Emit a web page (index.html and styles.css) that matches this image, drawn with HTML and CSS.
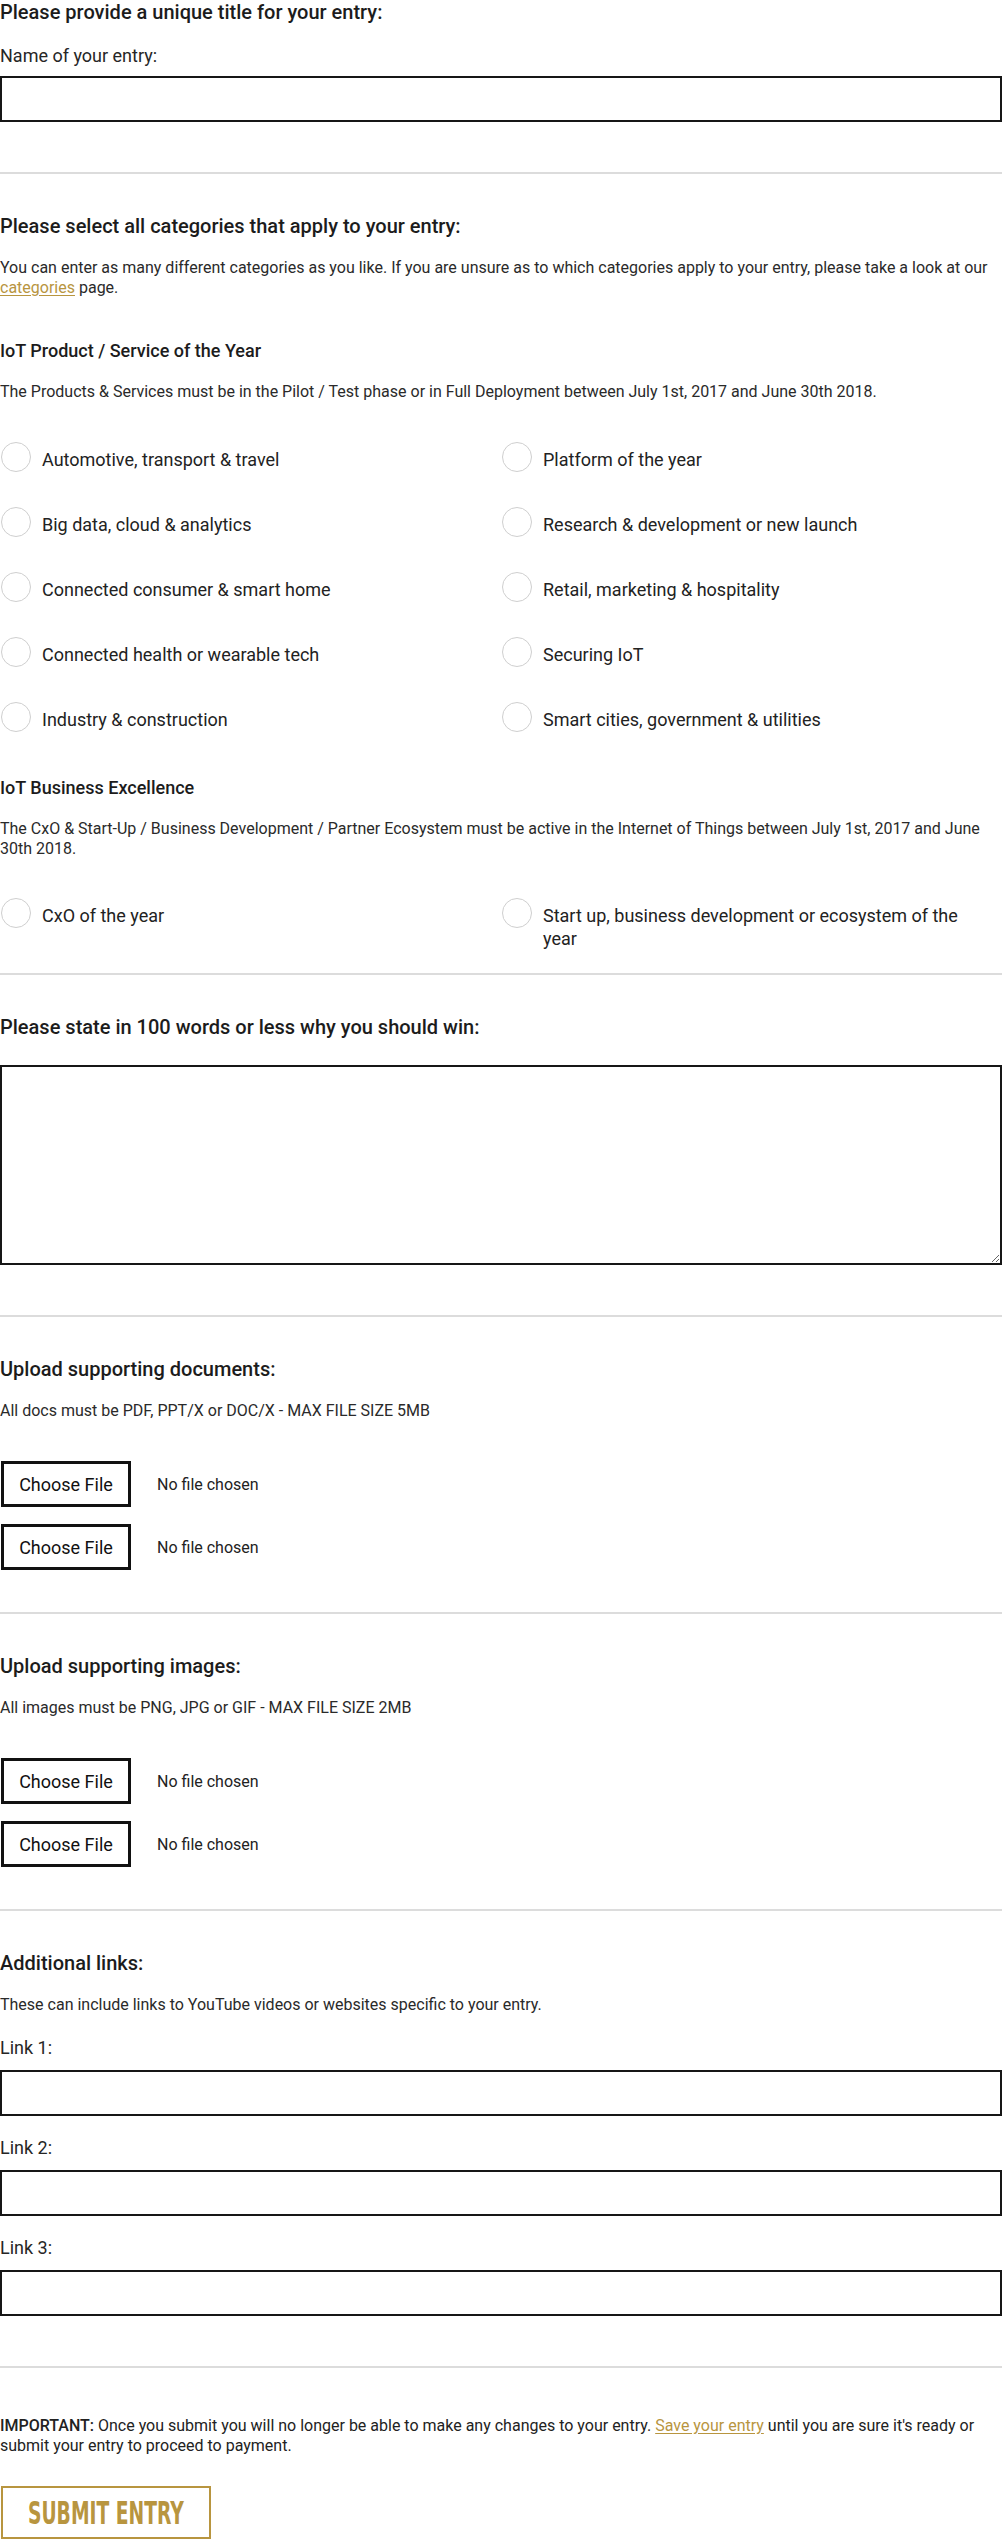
FILE: index.html
```html
<!DOCTYPE html>
<html lang="en">
<head>
<meta charset="utf-8">
<title>Entry form</title>
<link rel="stylesheet" href="styles.css">
</head>
<body>
<form class="entry-form">
  <section class="block block-first">
    <h2 class="block-title">Please provide a unique title for your entry:</h2>
    <label class="field-label" for="entry-name">Name of your entry:</label>
    <input class="text-input" id="entry-name" type="text">
  </section>
  <hr class="divider divider-after-input">

  <section class="block">
    <h2 class="block-title">Please select all categories that apply to your entry:</h2>
    <p class="note">You can enter as many different categories as you like. If you are unsure as to which categories apply to your entry, please take a look at our <a class="gold-link" href="#">categories</a> page.</p>

    <h3 class="group-title">IoT Product / Service of the Year</h3>
    <p class="note note-after-group">The Products &amp; Services must be in the Pilot / Test phase or in Full Deployment between July 1st, 2017 and June 30th 2018.</p>
    <div class="options options-first">
      <label class="option"><input type="checkbox" class="circle"><span class="option-text">Automotive, transport &amp; travel</span></label>
      <label class="option"><input type="checkbox" class="circle"><span class="option-text">Platform of the year</span></label>
      <label class="option"><input type="checkbox" class="circle"><span class="option-text">Big data, cloud &amp; analytics</span></label>
      <label class="option"><input type="checkbox" class="circle"><span class="option-text">Research &amp; development or new launch</span></label>
      <label class="option"><input type="checkbox" class="circle"><span class="option-text">Connected consumer &amp; smart home</span></label>
      <label class="option"><input type="checkbox" class="circle"><span class="option-text">Retail, marketing &amp; hospitality</span></label>
      <label class="option"><input type="checkbox" class="circle"><span class="option-text">Connected health or wearable tech</span></label>
      <label class="option"><input type="checkbox" class="circle"><span class="option-text">Securing IoT</span></label>
      <label class="option"><input type="checkbox" class="circle"><span class="option-text">Industry &amp; construction</span></label>
      <label class="option"><input type="checkbox" class="circle"><span class="option-text">Smart cities, government &amp; utilities</span></label>
    </div>

    <h3 class="group-title group-title-second">IoT Business Excellence</h3>
    <p class="note note-after-group">The CxO &amp; Start-Up / Business Development / Partner Ecosystem must be active in the Internet of Things between July 1st, 2017 and June 30th 2018.</p>
    <div class="options options-second">
      <label class="option"><input type="checkbox" class="circle"><span class="option-text">CxO of the year</span></label>
      <label class="option"><input type="checkbox" class="circle"><span class="option-text">Start up, business development or ecosystem of the year</span></label>
    </div>
  </section>
  <hr class="divider divider-after-options">

  <section class="block">
    <h2 class="block-title">Please state in 100 words or less why you should win:</h2>
    <textarea class="text-area"></textarea>
  </section>
  <hr class="divider divider-after-input">

  <section class="block">
    <h2 class="block-title">Upload supporting documents:</h2>
    <p class="note">All docs must be PDF, PPT/X or DOC/X - MAX FILE SIZE 5MB</p>
    <div class="files">
      <div class="file-row"><button type="button" class="file-button">Choose File</button><span class="file-status">No file chosen</span></div>
      <div class="file-row"><button type="button" class="file-button">Choose File</button><span class="file-status">No file chosen</span></div>
    </div>
  </section>
  <hr class="divider divider-after-files">

  <section class="block">
    <h2 class="block-title">Upload supporting images:</h2>
    <p class="note">All images must be PNG, JPG or GIF - MAX FILE SIZE 2MB</p>
    <div class="files">
      <div class="file-row"><button type="button" class="file-button">Choose File</button><span class="file-status">No file chosen</span></div>
      <div class="file-row"><button type="button" class="file-button">Choose File</button><span class="file-status">No file chosen</span></div>
    </div>
  </section>
  <hr class="divider divider-after-files">

  <section class="block">
    <h2 class="block-title">Additional links:</h2>
    <p class="note">These can include links to YouTube videos or websites specific to your entry.</p>
    <label class="field-label link-label" for="link-1">Link 1:</label>
    <input class="text-input" id="link-1" type="text">
    <label class="field-label link-label" for="link-2">Link 2:</label>
    <input class="text-input" id="link-2" type="text">
    <label class="field-label link-label" for="link-3">Link 3:</label>
    <input class="text-input" id="link-3" type="text">
  </section>
  <hr class="divider divider-after-input">

  <section class="block block-last">
    <p class="notice"><span class="notice-strong">IMPORTANT:</span> Once you submit you will no longer be able to make any changes to your entry. <a class="gold-link" href="#">Save your entry</a> until you are sure it's ready or submit your entry to proceed to payment.</p>
    <button type="submit" class="submit-button"><span class="submit-text">SUBMIT ENTRY</span></button>
  </section>
</form>
</body>
</html>
```
FILE: styles.css
```css
* {
  box-sizing: border-box;
}

html, body {
  margin: 0;
  padding: 0;
  background: #ffffff;
}

body {
  font-family: Roboto, "Liberation Sans", Arial, sans-serif;
  color: #222222;
  width: 1002px;
}

.entry-form {
  display: flex;
  flex-direction: column;
}

.block {
  display: flex;
  flex-direction: column;
  align-items: stretch;
  padding-top: 40px;
}

.block-first {
  padding-top: 0;
}

.block-title {
  font-size: 20px;
  line-height: 24px;
  font-weight: 500;
  margin: 0;
  color: #1c1c1c;
}

.field-label {
  font-size: 18px;
  line-height: 24px;
  font-weight: 400;
  color: #262626;
  margin-top: 20px;
  margin-bottom: 8px;
}

.link-label {
  margin-bottom: 10px;
}

.note + .link-label {
  margin-top: 21px;
}

.text-input {
  display: block;
  width: 100%;
  height: 46px;
  border: 2px solid #161616;
  border-radius: 0;
  background: #fff;
  padding: 0 10px;
  font: inherit;
  font-size: 18px;
  margin: 0;
  outline: none;
}

.text-area {
  display: block;
  width: 100%;
  height: 200px;
  border: 2px solid #161616;
  border-radius: 0;
  background: #fff;
  padding: 8px 10px;
  font: inherit;
  font-size: 18px;
  margin: 26px 0 0;
  resize: vertical;
}

.divider {
  border: 0;
  border-top: 2px solid #dcdcdc;
  margin: 0;
  height: 0;
  width: 100%;
}

.divider-after-input {
  margin-top: 50px;
}

.divider-after-options {
  margin-top: 23px;
}

.divider-after-files {
  margin-top: 42px;
}

.note {
  font-size: 16px;
  line-height: 20px;
  margin: 20px 0 0;
  color: #2a2a2a;
}

.note-after-group {
  margin-top: 19px;
}

.gold-link {
  color: #b8953f;
  text-decoration: underline;
  text-underline-offset: 2px;
}

.group-title {
  font-size: 18px;
  line-height: 24px;
  font-weight: 500;
  margin: 41px 0 0;
  color: #1c1c1c;
}

.group-title-second {
  margin-top: 44px;
}

.options {
  display: grid;
  grid-template-columns: 501px 1fr;
  row-gap: 35px;
  column-gap: 0;
}

.options-first {
  margin-top: 40px;
}

.options-second {
  margin-top: 39px;
}

.option {
  display: flex;
  align-items: flex-start;
  gap: 11px;
  cursor: pointer;
}

.circle {
  appearance: none;
  -webkit-appearance: none;
  flex: 0 0 30px;
  width: 30px;
  height: 30px;
  margin: 0 0 0 1px;
  border: 1px solid #cfcfcf;
  border-radius: 50%;
  background: #fff;
}

.option-text {
  font-size: 18px;
  line-height: 23px;
  padding-top: 6px;
  max-width: 430px;
  color: #222;
}

.files {
  display: flex;
  flex-direction: column;
  gap: 17px;
  margin-top: 40px;
}

.file-row {
  display: flex;
  align-items: center;
  gap: 26px;
}

.file-button {
  width: 130px;
  height: 46px;
  margin: 0 0 0 1px;
  border: 3px solid #111;
  border-radius: 0;
  background: #fff;
  font-family: Roboto, "Liberation Sans", Arial, sans-serif;
  font-size: 18px;
  font-weight: 400;
  color: #111;
  padding: 0;
}

.file-status {
  font-size: 16px;
  color: #222;
}

.block-last {
  padding-top: 48px;
}

.notice {
  font-size: 16px;
  line-height: 20px;
  margin: 0;
  color: #222;
}

.notice-strong {
  font-weight: 500;
}

.submit-button {
  align-self: flex-start;
  width: 210px;
  height: 53px;
  margin: 30px 0 0 1px;
  border: 2px solid #b8953f;
  border-radius: 0;
  background: #fff;
  padding: 0;
  display: flex;
  align-items: center;
  justify-content: center;
  overflow: hidden;
}

.submit-text {
  display: inline-block;
  white-space: nowrap;
  font-family: "DejaVu Sans Condensed", "DejaVu Sans", sans-serif;
  font-weight: 700;
  font-size: 32px;
  line-height: 32px;
  color: #b8953f;
  letter-spacing: 0;
  transform: scaleX(0.65);
}
```
